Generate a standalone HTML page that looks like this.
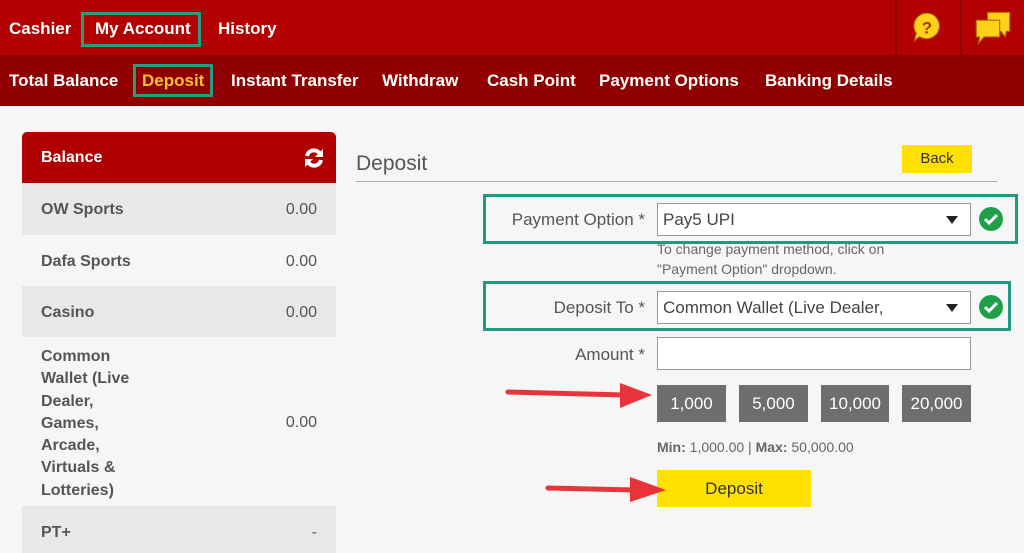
<!DOCTYPE html>
<html><head><meta charset="utf-8"><style>
*{margin:0;padding:0;box-sizing:border-box}
body{width:1024px;height:553px;overflow:hidden;background:#f6f6f6;font-family:"Liberation Sans",sans-serif;position:relative;color:#555}
.a{position:absolute;white-space:nowrap}
.top{position:absolute;left:0;top:0;width:1024px;height:55px;background:#b30000}
.sub{position:absolute;left:0;top:55px;width:1024px;height:51px;background:#900000}
.nav{color:#fff;font-weight:bold;font-size:17px}
.row{position:absolute;left:22px;width:314px;font-size:16px;font-weight:bold;color:#555}
.row .v{position:absolute;right:19px;font-weight:normal}
.sel{position:absolute;left:657px;width:314px;height:33px;background:#fff;border:1px solid #999;font-size:17px;color:#444;padding:6px 0 0 5px}
.sel .tri{position:absolute;right:12px;top:12px;width:0;height:0;border-left:6px solid transparent;border-right:6px solid transparent;border-top:8px solid #222}
.lbl{position:absolute;font-size:17px;color:#555;text-align:right}
.gb{position:absolute;border:3px solid #1f9a80}
.chk{position:absolute;width:24px;height:24px;border-radius:50%;background:#1ea04a}
.amt{position:absolute;top:385px;height:37px;background:#6e6e6e;color:#fff;font-size:17px;text-align:center;line-height:37px}
</style></head><body>
<div class="top"></div>
<div class="a" style="left:895px;top:0;width:2px;height:55px;background:#8e0000"></div>
<div class="a" style="left:960px;top:0;width:2px;height:55px;background:#8e0000"></div>
<div class="sub"></div>
<div class="a nav" style="left:9px;top:19px">Cashier</div>
<div class="a" style="left:81px;top:12px;width:120px;height:35px;border:3px solid #2a9a84"></div>
<div class="a nav" style="left:95px;top:19px">My Account</div>
<div class="a nav" style="left:218px;top:19px">History</div>
<div class="a nav" style="left:9px;top:71px">Total Balance</div>
<div class="a" style="left:133px;top:64px;width:80px;height:33px;border:3px solid #2a9a84"></div>
<div class="a nav" style="left:142px;top:71px;color:#ffc02a">Deposit</div>
<div class="a nav" style="left:231px;top:71px">Instant Transfer</div>
<div class="a nav" style="left:382px;top:71px">Withdraw</div>
<div class="a nav" style="left:487px;top:71px">Cash Point</div>
<div class="a nav" style="left:599px;top:71px">Payment Options</div>
<div class="a nav" style="left:765px;top:71px">Banking Details</div>
<svg class="a" style="left:911px;top:11px" width="32" height="32" viewBox="0 0 30 30"><path d="M15 2a12 12 0 1 1-7 22l-5 4 2-7A12 12 0 0 1 15 2z" fill="#ffd21a" stroke="#b06000" stroke-width="1"/><text x="15" y="21" text-anchor="middle" font-family="Liberation Sans" font-weight="bold" font-size="16" fill="#a04000">?</text></svg>
<svg class="a" style="left:974px;top:10px" width="38" height="36" viewBox="0 0 34 32"><path d="M12 2h20v17h-3l-1 5-4-5H12z" fill="#ffd21a" stroke="#b06000"/><path d="M2 9h21v15H9l-5 6 1-6H2z" fill="#ffd21a" stroke="#b06000"/></svg>

<div class="a" style="left:22px;top:132px;width:314px;height:51px;background:#b00000;border-radius:5px 5px 0 0"></div>
<div class="a" style="left:41px;top:149px;color:#fff;font-weight:bold;font-size:16px">Balance</div>
<svg class="a" style="left:303px;top:147px" width="22" height="22" viewBox="0 0 22 22"><path d="M4 9A7 7 0 0 1 17 7" fill="none" stroke="#fff" stroke-width="4"/><path d="M18 13A7 7 0 0 1 5 15" fill="none" stroke="#fff" stroke-width="4"/><path d="M20 2v8h-8z" fill="#fff"/><path d="M2 20v-8h8z" fill="#fff"/></svg>
<div class="row" style="top:183px;height:52px;background:#e8e8e8"><span class="a" style="left:19px;top:18px">OW Sports</span><span class="v a" style="top:18px">0.00</span></div>
<div class="row" style="top:235px;height:51px;background:#f6f6f6"><span class="a" style="left:19px;top:18px">Dafa Sports</span><span class="v a" style="top:18px">0.00</span></div>
<div class="row" style="top:286px;height:51px;background:#e8e8e8"><span class="a" style="left:19px;top:18px">Casino</span><span class="v a" style="top:18px">0.00</span></div>
<div class="row" style="top:337px;height:169px;background:#f6f6f6"><span class="a" style="left:19px;top:9px;line-height:22.3px">Common<br>Wallet (Live<br>Dealer,<br>Games,<br>Arcade,<br>Virtuals &amp;<br>Lotteries)</span><span class="v a" style="top:77px">0.00</span></div>
<div class="row" style="top:506px;height:47px;background:#e8e8e8"><span class="a" style="left:19px;top:18px">PT+</span><span class="v a" style="top:18px">-</span></div>

<div class="a" style="left:356px;top:152px;font-size:21px;color:#555">Deposit</div>
<div class="a" style="left:356px;top:181px;width:641px;height:1px;background:#aaa"></div>
<div class="a" style="left:902px;top:145px;width:70px;height:28px;background:#ffe000;color:#333;font-size:15px;text-align:center;line-height:28px">Back</div>

<div class="gb" style="left:483px;top:194px;width:535px;height:50px"></div>
<div class="lbl" style="left:480px;width:165px;top:210px">Payment Option *</div>
<div class="sel" style="top:203px">Pay5 UPI<span class="tri"></span></div>
<div class="chk" style="left:979px;top:207px"></div>
<svg class="a" style="left:979px;top:207px" width="24" height="24"><path d="M6 12l4 4 8-8" fill="none" stroke="#fff" stroke-width="3"/></svg>
<div class="a" style="left:657px;top:239px;font-size:14px;color:#666;line-height:20px">To change payment method, click on<br>"Payment Option" dropdown.</div>

<div class="gb" style="left:483px;top:281px;width:528px;height:50px"></div>
<div class="lbl" style="left:480px;width:165px;top:298px">Deposit To *</div>
<div class="sel" style="top:291px">Common Wallet (Live Dealer,<span class="tri"></span></div>
<div class="chk" style="left:979px;top:295px"></div>
<svg class="a" style="left:979px;top:295px" width="24" height="24"><path d="M6 12l4 4 8-8" fill="none" stroke="#fff" stroke-width="3"/></svg>

<div class="lbl" style="left:480px;width:165px;top:345px">Amount *</div>
<div class="sel" style="top:337px"></div>
<div class="amt" style="left:657px;width:69px">1,000</div>
<div class="amt" style="left:739px;width:69px">5,000</div>
<div class="amt" style="left:821px;width:68px">10,000</div>
<div class="amt" style="left:902px;width:69px">20,000</div>
<div class="a" style="left:657px;top:439px;font-size:14px;color:#666"><b>Min:</b> 1,000.00 | <b>Max:</b> 50,000.00</div>
<div class="a" style="left:657px;top:470px;width:154px;height:37px;background:#ffe000;color:#333;font-size:17px;text-align:center;line-height:37px">Deposit</div>

<svg class="a" style="left:500px;top:380px" width="170" height="130"><path d="M8 12L125 15" stroke="#e8333a" stroke-width="5" stroke-linecap="round"/><path d="M120 3L152 15L120 28z" fill="#e8333a"/><path d="M48 108L135 110" stroke="#e8333a" stroke-width="5" stroke-linecap="round"/><path d="M130 97L166 110L130 122z" fill="#e8333a"/></svg>
</body></html>
